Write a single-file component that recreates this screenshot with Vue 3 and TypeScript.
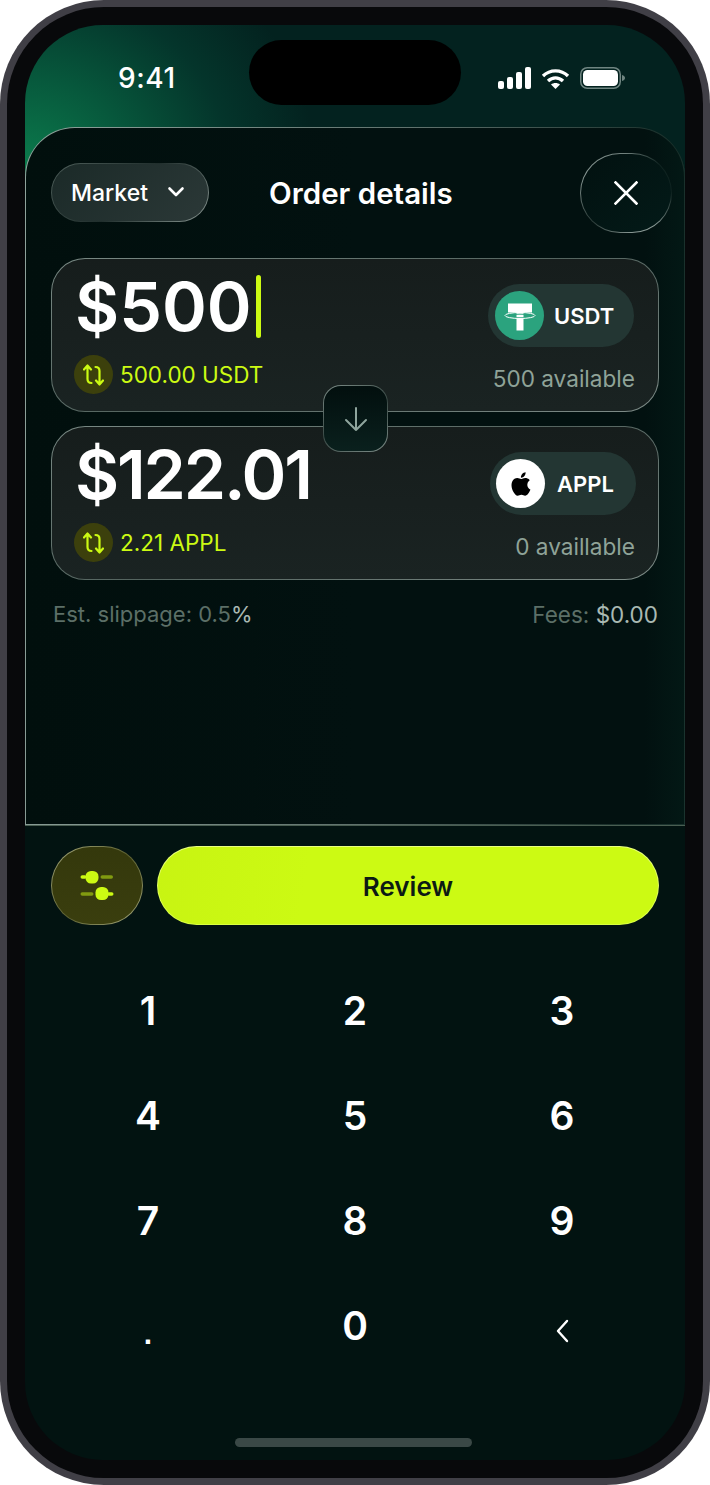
<script setup lang="ts">
const keys: string[] = ['1', '2', '3', '4', '5', '6', '7', '8', '9', '.', '0']
</script>

<template>
  <div class="phone">
    <div class="bezel">
      <div class="screen">
        <div class="island"></div>
        <div class="status">
          <span class="time">9:41</span>
          <div class="status-icons">
            <svg width="33" height="22" viewBox="0 0 33 22" fill="#fff">
              <rect x="0" y="14" width="6" height="8" rx="2" />
              <rect x="9" y="10" width="6" height="12" rx="2" />
              <rect x="18" y="5" width="6" height="17" rx="2" />
              <rect x="27" y="0" width="6" height="22" rx="2" />
            </svg>
            <svg width="29" height="21" viewBox="0 0 29 21" fill="none" stroke="#fff" stroke-width="3.4">
              <path d="M2 8 C 9 1.2 20 1.2 27 8" />
              <path d="M7 13 C 11.5 8.8 17.5 8.8 22 13" />
              <path d="M14.5 21 L10 16.6 C 12.5 14.6 16.5 14.6 19 16.6 Z" fill="#fff" stroke="none" />
            </svg>
            <svg width="45" height="22" viewBox="0 0 45 22">
              <rect x="0.75" y="0.75" width="39.5" height="20.5" rx="6.5" fill="none" stroke="#6f8581" stroke-width="1.5" />
              <rect x="3" y="3" width="35" height="16" rx="4.5" fill="#fff" />
              <path d="M42 8 C 44 8.6 45 9.6 45 11 C 45 12.4 44 13.4 42 14 Z" fill="#6f8581" />
            </svg>
          </div>
        </div>

        <section class="panel">
          <header class="head">
            <button class="market">Market
              <svg width="18" height="12" viewBox="0 0 18 12" fill="none" stroke="#fff" stroke-width="2.6" stroke-linecap="round" stroke-linejoin="round"><path d="M2.5 2.5 9 9l6.5-6.5" /></svg>
            </button>
            <h1 class="title">Order details</h1>
            <button class="close" aria-label="Close">
              <svg width="24" height="24" viewBox="0 0 24 24" fill="none" stroke="#fff" stroke-width="2.6" stroke-linecap="square"><path d="M1.5 1.5 22.5 22.5M22.5 1.5 1.5 22.5" /></svg>
            </button>
          </header>

          <div class="cards">
            <div class="card first">
              <div class="col">
                <div class="amount">$500<i class="caret"></i></div>
                <div class="conv">
                  <span class="swap">
                    <svg width="21" height="22" viewBox="0 0 21 22" fill="none" stroke="#ccfa13" stroke-width="2.2" stroke-linecap="round" stroke-linejoin="round"><path d="M1 5.5 4.5 1.5 8 5.5M4.5 2V15c0 2.5 1.5 4 4 4M20 16.5l-3.5 4-3.5-4M16.5 20V7c0-2.5-1.5-4-4-4" /></svg>
                  </span>
                  <span>500.00 USDT</span>
                </div>
              </div>
              <div class="col end">
                <div class="token usdt">
                  <span class="coin tether">
                    <svg width="36" height="36" viewBox="0 0 36 36">
                      <path d="M6 5.5h24v9h-8.5v18h-7v-18H6z" fill="#fff" />
                      <ellipse cx="18" cy="18" rx="11" ry="1.8" fill="none" stroke="#2ba37e" stroke-width="1" />
                      <ellipse cx="18" cy="17.5" rx="15" ry="3" fill="none" stroke="#fff" stroke-width="1" />
                    </svg>
                  </span>
                  <span>USDT</span>
                </div>
                <div class="avail">500 available</div>
              </div>
            </div>

            <button class="flip" aria-label="Swap">
              <svg width="24" height="26" viewBox="0 0 24 26" fill="none" stroke="#8fa59d" stroke-width="2" stroke-linecap="round" stroke-linejoin="round"><path d="M12 2v22M2 14l10 10 10-10" /></svg>
            </button>

            <div class="card second">
              <div class="col">
                <div class="amount narrow">$122.01</div>
                <div class="conv">
                  <span class="swap">
                    <svg width="21" height="22" viewBox="0 0 21 22" fill="none" stroke="#ccfa13" stroke-width="2.2" stroke-linecap="round" stroke-linejoin="round"><path d="M1 5.5 4.5 1.5 8 5.5M4.5 2V15c0 2.5 1.5 4 4 4M20 16.5l-3.5 4-3.5-4M16.5 20V7c0-2.5-1.5-4-4-4" /></svg>
                  </span>
                  <span>2.21 APPL</span>
                </div>
              </div>
              <div class="col end">
                <div class="token appl">
                  <span class="coin apple">
                    <svg width="28" height="28" viewBox="0 0 24 24" fill="#000"><path d="M18.71 19.5c-.83 1.24-1.71 2.45-3.05 2.47-1.34.03-1.77-.79-3.29-.79-1.53 0-2 .77-3.27.82-1.31.05-2.3-1.32-3.14-2.53C4.25 17 2.94 12.45 4.7 9.39c.87-1.52 2.43-2.48 4.12-2.51 1.28-.02 2.5.87 3.29.87.78 0 2.26-1.07 3.81-.91.65.03 2.47.26 3.64 1.98-.09.06-2.17 1.28-2.15 3.81.03 3.02 2.65 4.03 2.68 4.04-.03.07-.42 1.44-1.38 2.83M13 3.5c.73-.83 1.94-1.46 2.94-1.5.13 1.17-.34 2.35-1.04 3.19-.69.85-1.83 1.51-2.95 1.42-.15-1.15.41-2.35 1.05-3.11z" /></svg>
                  </span>
                  <span>APPL</span>
                </div>
                <div class="avail">0 availlable</div>
              </div>
            </div>
          </div>

          <div class="meta">
            <span class="slip">Est. slippage: 0.5<b>%</b></span>
            <span>Fees: <b>$0.00</b></span>
          </div>
        </section>

        <div class="actions">
          <button class="settings" aria-label="Settings">
            <svg width="34" height="29" viewBox="0 0 34 29">
              <rect x="0.5" y="4.25" width="6" height="3.5" rx="1.75" fill="#ccfa13" />
              <rect x="20.5" y="4.25" width="12.5" height="3.5" rx="1.75" fill="#ccfa13" opacity=".5" />
              <rect x="5.5" y="0" width="13" height="12.5" rx="5.5" fill="#ccfa13" />
              <rect x="0.5" y="21.25" width="13" height="3.5" rx="1.75" fill="#ccfa13" opacity=".5" />
              <rect x="27" y="21.25" width="6.5" height="3.5" rx="1.75" fill="#ccfa13" />
              <rect x="15.5" y="16" width="13" height="13" rx="5.5" fill="#ccfa13" />
            </svg>
          </button>
          <button class="review">Review</button>
        </div>

        <div class="keypad">
          <div v-for="k in keys" :key="k" class="key" :class="{ dot: k === '.' }">{{ k }}</div>
          <div class="key back">
            <svg width="16" height="24" viewBox="0 0 16 24" fill="none" stroke="#fff" stroke-width="2.4" stroke-linecap="round" stroke-linejoin="round"><path d="M13 2 4 12l9 10" /></svg>
          </div>
        </div>

        <div class="home"></div>
      </div>
    </div>
  </div>
</template>

<style>
html, body { margin: 0; background: #fff; }
</style>

<style scoped>
* { box-sizing: border-box; }
.phone {
  width: 710px; height: 1485px; padding: 7px;
  background: #403f46; border-radius: 104px;
  font-family: Inter, "Liberation Sans", sans-serif;
  color: #fff;
}
.bezel {
  height: 100%; padding: 18px;
  background: #08090b; border-radius: 97px;
}
.screen {
  position: relative; height: 100%;
  display: flex; flex-direction: column;
  border-radius: 78px; overflow: hidden;
  background:
    radial-gradient(ellipse 290px 250px at 0 140px, #0b7a4c 0%, #07583c 35%, #04352b 70%, rgba(3,34,31,0) 100%) no-repeat,
    linear-gradient(#03221f 0 170px, #021311 170px);
}
button { font-family: inherit; color: inherit; cursor: pointer; padding: 0; }
.island {
  position: absolute; left: 224px; top: 15px;
  width: 212px; height: 65px; border-radius: 33px; background: #000;
}
.status {
  height: 102px; flex: none;
  display: flex; justify-content: space-between; align-items: center;
  padding: 0 60px 0 93px;
}
.time { font-size: 28px; font-weight: 500; letter-spacing: .6px; line-height: 1; margin-top: 4px; }
.status-icons { display: flex; align-items: center; gap: 10px; margin-top: 4px; }

.panel {
  height: 698px; flex: none; padding: 0 25px;
  border-radius: 50px 50px 0 0;
  border: 1px solid transparent;
  background:
    linear-gradient(90deg, #010f0d 0%, #021110 50%, #021110 94%, #031815 100%) padding-box,
    linear-gradient(95deg, #8fa39c 0%, #5f716c 55%, #1a302b 90%, #1a332e 100%) border-box;
  box-shadow: 0 1px 0 #4a5e52;
}
.head {
  position: relative; height: 130px;
  display: flex; align-items: center; justify-content: space-between;
}
.market {
  width: 158px; height: 59px; border-radius: 30px; margin-top: -2px;
  padding: 1px 4px 0 0;
  display: flex; align-items: center; justify-content: center; gap: 19px;
  font-size: 23px; font-weight: 500;
  border: 1px solid transparent;
  background:
    linear-gradient(135deg, #1b2a28, #2b3837) padding-box,
    linear-gradient(135deg, #52625e, #202e2c 50%, #8d9a96) border-box;
}
.market svg { margin-top: -2px; }
.title {
  position: absolute; left: 218px; top: 50px; margin: 0;
  font-size: 29.5px; font-weight: 600; line-height: 30px;
}
.close {
  position: absolute; left: 529px; top: 25px;
  width: 92px; height: 80px; border-radius: 40px;
  display: flex; align-items: center; justify-content: center;
  border: 1px solid transparent;
  background:
    linear-gradient(135deg, #021110, #031a18) padding-box,
    conic-gradient(#6f7f7b 0deg, #0f2320 50deg, #0f2320 90deg, #8b9a96 140deg, #8b9a96 170deg, #2b3b38 230deg, #8b9a96 290deg, #6f7f7b 360deg) border-box;
}
.cards {
  position: relative;
  display: flex; flex-direction: column; gap: 14px;
}
.card {
  height: 154px; border-radius: 34px; padding: 0 24px 0 22px;
  display: flex; justify-content: space-between;
  border: 1px solid transparent;
  background:
    linear-gradient(#161d1c, #1a2322) padding-box,
    linear-gradient(160deg, #7a8a85, #54645f 50%, #7f8d89) border-box;
}
.col { display: flex; flex-direction: column; }
.end { align-items: flex-end; }
.amount {
  display: flex; align-items: center;
  font-size: 68px; font-weight: 600; line-height: 68px; height: 68px; margin-top: 13px; margin-left: 1px;
}
.narrow { letter-spacing: -2.2px; }
.caret {
  width: 5px; height: 63px; margin-left: 4px;
  border-radius: 3px; background: #ccfa13;
}
.conv {
  display: flex; align-items: center; gap: 7px; margin-top: 15px;
  color: #ccfa13; font-size: 22.5px; line-height: 39px;
}
.swap {
  width: 39px; height: 39px; border-radius: 50%; background: #3c400c;
  display: flex; align-items: center; justify-content: center;
}
.token {
  width: 146px; height: 63px; border-radius: 32px; background: #233633;
  display: flex; align-items: center; gap: 10px; padding-left: 7px;
  font-size: 22px; font-weight: 600;
  margin-top: 25px;
}
.appl { margin-right: -2px; padding-left: 6px; gap: 12px; }
.coin {
  width: 49px; height: 49px; border-radius: 50%; flex: none;
  display: flex; align-items: center; justify-content: center;
}
.tether { background: #2ba37e; }
.apple { background: #fff; }
.avail { margin-top: 18px; margin-right: -1px; font-size: 22.6px; line-height: 27px; color: #8fa398; }
.flip {
  position: absolute; left: 272px; top: 127px; z-index: 1;
  width: 65px; height: 67px; border-radius: 18px;
  display: flex; align-items: center; justify-content: center;
  border: 1px solid transparent;
  background:
    linear-gradient(#020f0e, #0a201d) padding-box,
    linear-gradient(150deg, #7f8f8a, #3a4a46 50%, #7f8f8a) border-box;
}
.meta {
  display: flex; justify-content: space-between; padding: 0 1px 0 2px;
  margin-top: 21px; font-size: 22.5px; line-height: 27px; color: #5c6f67;
}
.slip { font-size: 22px; }
.meta b { font-weight: 400; color: #a9b9b3; }

.actions {
  display: flex; gap: 14px; padding: 21px 26px 0; flex: none;
}
.settings {
  width: 92px; height: 79px; border-radius: 40px;
  display: flex; align-items: center; justify-content: center;
  border: 1px solid transparent;
  background:
    linear-gradient(#34380c, #3a3e0e) padding-box,
    linear-gradient(135deg, #a8ab80, #5c6030 50%, #a8ab80) border-box;
}
.review {
  flex: 1; height: 79px; border-radius: 40px; padding-top: 1px;
  font-size: 26px; font-weight: 600; color: #0c1a14;
  border: 1px solid transparent;
  background:
    linear-gradient(100deg, #c8f412, #ccfa13 30%) padding-box,
    linear-gradient(#eaff80, #d8ff40) border-box;
}

.keypad {
  display: grid; grid-template-columns: repeat(3, 207px); grid-auto-rows: 105px;
  padding-left: 19.5px; margin-top: 33px;
}
.key {
  height: 105px; display: flex; align-items: center; justify-content: center;
  font-size: 39px; font-weight: 600; line-height: 1;
}
.dot { padding-top: 16px; font-family: "Liberation Sans", sans-serif; font-weight: 700; font-size: 30px; }
.back { padding-top: 10px; }
.home {
  position: absolute; left: 210px; bottom: 13px;
  width: 237px; height: 9px; border-radius: 5px; background: #3a4846;
}
</style>
